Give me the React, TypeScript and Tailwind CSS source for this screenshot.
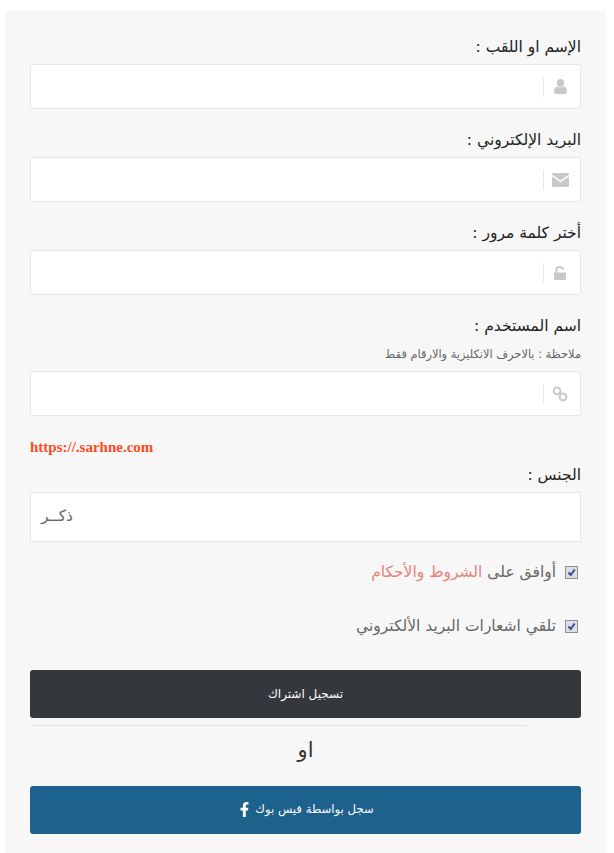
import { FaFacebookF } from "react-icons/fa";
import type { ReactNode } from "react";

const font = "font-['DejaVu_Sans','Noto_Sans',sans-serif]";
const labelCls = "block h-[28px] text-[15.5px] leading-[22px] text-[#222]";

function IconInput({ icon }: { icon: ReactNode }) {
  return (
    <div className="h-[45px] bg-white border border-[#e6e6e6] rounded-[3px] flex items-center">
      <div className="w-[36px] flex justify-center pr-[4px] text-[#c9c9c9]">{icon}</div>
      <div className="w-px h-[20px] bg-[#e9e9e9]" />
    </div>
  );
}

function UserIcon() {
  return (
    <svg viewBox="0 0 13 15" className="w-[13px] h-[15px]" fill="currentColor">
      <ellipse cx="6.5" cy="4" rx="3.6" ry="4" />
      <path d="M0 12.5 C0 9.5 1.5 7.6 3.4 7.4 C4.2 8.1 5.3 8.5 6.5 8.5 C7.7 8.5 8.8 8.1 9.6 7.4 C11.5 7.6 13 9.5 13 12.5 C13 14 12 15 10.8 15 L2.2 15 C1 15 0 14 0 12.5 Z" />
    </svg>
  );
}

function MailIcon() {
  return (
    <svg viewBox="0 0 17 14" className="w-[17px] h-[14px]" fill="currentColor">
      <path d="M1.2 0 L15.8 0 C16.5 0 17 .5 17 1.2 L17 1.6 L8.5 7.4 L0 1.6 L0 1.2 C0 .5 .5 0 1.2 0 Z" />
      <path d="M0 3.4 L8.5 9.2 L17 3.4 L17 12.8 C17 13.5 16.5 14 15.8 14 L1.2 14 C.5 14 0 13.5 0 12.8 Z" />
    </svg>
  );
}

function UnlockIcon() {
  return (
    <svg viewBox="0 0 12 14" className="w-[12px] h-[14px]" fill="currentColor">
      <path d="M2.4 7 L2.4 4 C2.4 2 4 1 5.7 1 C7.4 1 9 2 9 4" fill="none" stroke="currentColor" strokeWidth="2" />
      <rect x="0" y="6.5" width="12" height="7.5" rx="1" />
    </svg>
  );
}

function LinkIcon() {
  return (
    <svg viewBox="0 0 16 16" className="w-[16px] h-[16px]" fill="none" stroke="currentColor" strokeWidth="2">
      <circle cx="5" cy="5" r="3.4" />
      <circle cx="11" cy="11" r="3.4" />
    </svg>
  );
}

function Check() {
  return (
    <span className="w-[13px] h-[13px] shrink-0 border border-[#8f8f8f] bg-[#dcdfe6] flex items-center justify-center">
      <svg viewBox="0 0 11 11" className="w-[11px] h-[11px]">
        <path d="M2.5 5.5 L4.7 8 L8.7 2.5" fill="none" stroke="#3c4c8c" strokeWidth="2" />
      </svg>
    </span>
  );
}

export default function App() {
  return (
    <div dir="rtl" className={`${font} bg-white min-h-[853px] pt-[11px] pr-[8px] overflow-hidden`}>
      <div className="w-[601px] h-[842px] bg-[#f7f7f7] rounded-t-[4px] px-[25px] pt-[25px]">
        <label className={labelCls}>الإسم او اللقب :</label>
        <IconInput icon={<UserIcon />} />
        <label className={`${labelCls} mt-[20px]`}>البريد الإلكتروني :</label>
        <IconInput icon={<MailIcon />} />
        <label className={`${labelCls} mt-[20px]`}>أختر كلمة مرور :</label>
        <IconInput icon={<UnlockIcon />} />
        <label className={`${labelCls} mt-[20px]`}>اسم المستخدم :</label>
        <p className="h-[28px] pt-[3px] text-[11.4px] leading-[17px] text-[#666]">ملاحظة : بالاحرف الانكليزية والارقام فقط</p>
        <IconInput icon={<LinkIcon />} />
        <div dir="ltr" className="mt-[22px] h-[20px] text-[15px] leading-[18px] font-bold text-[#ff4a1c] font-['Liberation_Serif',serif]">https://.sarhne.com</div>
        <label className="block mt-[8px] h-[26px] text-[15.5px] leading-[18px] text-[#222]">الجنس :</label>
        <div className="h-[50px] bg-white border border-[#e6e6e6] flex items-center justify-end pl-[10px] text-[15.5px] text-[#666]">
          <span>ذكــر</span>
        </div>
        <div className="mt-[20px] h-[20px] flex items-center gap-[9px] pr-[3px] text-[15.5px] text-[#666]">
          <Check />
          <span className="pt-[2px]">أوافق على <span className="text-[#e8827a]">الشروط والأحكام</span></span>
        </div>
        <div className="mt-[34px] h-[20px] flex items-center gap-[9px] pr-[3px] text-[15.5px] text-[#666]">
          <Check />
          <span className="pt-[2px]">تلقي اشعارات البريد الألكتروني</span>
        </div>
        <button className="block mt-[34px] w-full h-[48px] rounded-[3px] bg-[#34373c] text-white text-[12px]">تسجيل اشتراك</button>
        <hr className="mt-[7px] mr-[55px] ml-0 border-0 h-px bg-[#e2e2e2]" />
        <div className="h-[50px] text-center text-[21px] leading-[49px] text-[#333]">او</div>
        <button className="block mt-[10px] w-full h-[48px] rounded-[3px] bg-[#1d628d] text-white text-[11.7px]">
          <span className="inline-flex items-center gap-[3px]">سجل بواسطة فيس بوك <FaFacebookF size={15} /></span>
        </button>
      </div>
    </div>
  );
}
